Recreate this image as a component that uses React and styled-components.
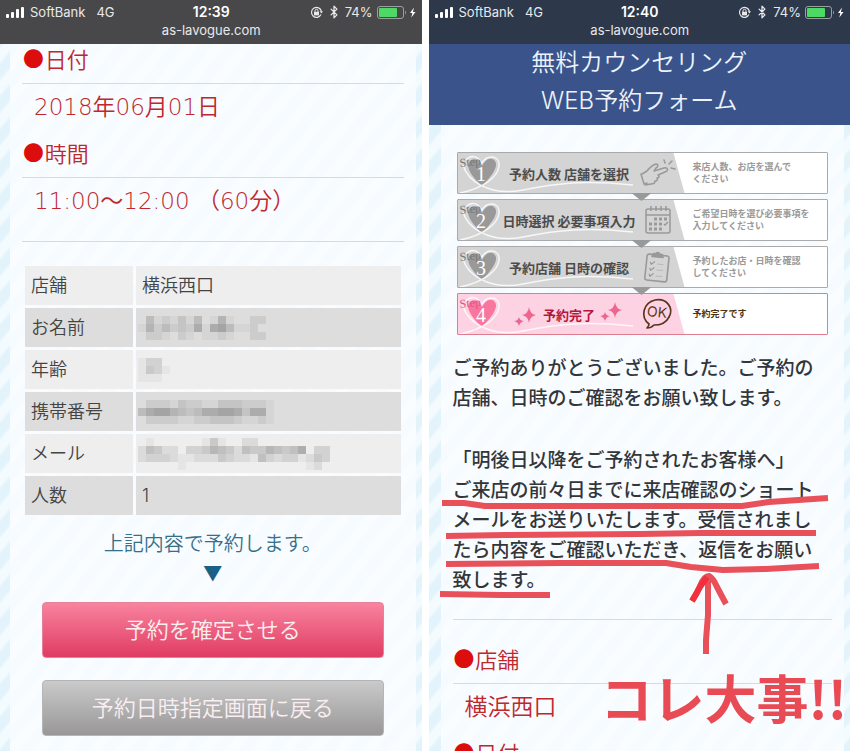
import React from 'react';
import styled, { createGlobalStyle } from 'styled-components';
import { Bluetooth } from 'lucide-react';

const GlobalStyle = createGlobalStyle`
    * {
        box-sizing: border-box;
    }

    body {
        margin: 0;
        background: white;
        font-family: Inter, "Noto Sans CJK JP", sans-serif;
    }

    h1, h2, p, dl, dt, dd {
        margin: 0;
        font-weight: inherit;
    }
`;

const Page = styled.main`
    display: grid;
    grid-template-columns: 1fr 1fr;
    gap: 7px;
    height: 100vh;
    overflow: hidden;
`;

const Phone = styled.section`
    position: relative;
    display: flex;
    flex-direction: column;
    min-width: 0;
    overflow: hidden;
    background: repeating-linear-gradient(130deg, #e3f3fc 0 8px, #f3fbfe 11px 18px, #e3f3fc 21px);
`;

const StatusBar = styled.header`
    flex: none;
    height: 44px;
    padding: 3px 5px 0 6px;
    background: ${props => props.$color};
    color: #e8e8ea;
    font-size: 13px;
    line-height: 18px;
    text-align: center;
`;

const StatusRow = styled.div`
    display: grid;
    grid-template-columns: 1fr auto 1fr;
    align-items: center;
`;

const StatusGroup = styled.div`
    display: flex;
    align-items: center;
    justify-content: ${props => props.$end ? 'flex-end' : 'flex-start'};
    gap: ${props => props.$end ? '4px' : '5px'};
`;

const Network = styled.span`
    margin-left: 6px;
`;

const Time = styled.span`
    font-weight: 600;
    font-size: 14px;
    color: white;
`;

const Panel = styled.div`
    flex: 1 0 auto;
    margin: 0 6px 0 ${props => props.$left};
    padding: 0 12px;
    background: repeating-linear-gradient(130deg, #f6fbff 0 8px, #fafdff 11px 18px, #f6fbff 21px);
`;

const Term = styled.dt`
    padding-bottom: 7px;
    border-bottom: 1px solid #d3dce0;
    color: #c0272d;
    font-size: 22px;
    font-weight: 350;
    line-height: 32px;
`;

const Dot = styled.span`
    color: #dc0d0d;
    font-size: 25px;
    line-height: 1;
`;

const Detail = styled.dd`
    && {
        padding: 7px 0 15px 12px;
    }
    color: #c0272d;
    font-family: "DejaVu Sans", "Noto Sans CJK JP", sans-serif;
    font-size: 23px;
    font-weight: 350;
    line-height: 32px;
`;

const Divider = styled.hr`
    margin: ${props => props.$margin};
    border: 0;
    border-top: 1px solid #d3dce0;
`;

const Table = styled.table`
    width: 100%;
    border-spacing: 3px;
    table-layout: fixed;
    color: #444;
    font-size: 18px;
    line-height: 26px;
`;

const Row = styled.tr`
    height: 39px;
    background: #eeeeee;

    &:nth-child(even) {
        background: #dddddd;
    }
`;

const Label = styled.th`
    width: 108px;
    padding: 0 6px;
    font-weight: 350;
    text-align: left;
`;

const Cell = styled.td`
    padding: 0 6px;
    font-weight: 350;
`;

const Blocks = styled.svg`
    display: block;
    margin-left: -4px;
`;

const Lead = styled.p`
    && {
        font-weight: 350;
    }
    padding-top: 11px;
    color: #35708a;
    font-size: 20px;
    line-height: 30px;
    text-align: center;
`;

const Pointer = styled.span`
    display: block;
    color: #1b6085;
`;

const Buttons = styled.div`
    display: flex;
    flex-direction: column;
    gap: 22px;
    padding: 13px 20px;
`;

const Button = styled.button`
    height: 56px;
    padding: 0 0 5px;
    border: 1px solid ${props => props.$border};
    border-radius: 4px;
    background: linear-gradient(${props => props.$from}, ${props => props.$to});
    color: #fbeef1;
    font-family: inherit;
    font-size: 22px;
    font-weight: 350;
`;

const Title = styled.h1`
    && {
        font-weight: 350;
    }
    padding-bottom: 5px;
    background: #3a548b;
    color: #edf2fb;
    font-size: 24px;
    line-height: 38px;
    text-align: center;
`;

const Steps = styled.ol`
    display: flex;
    flex-direction: column;
    gap: 5px;
    margin: 0 4px;
    padding: 27px 0 19px;
    list-style: none;
`;

const Step = styled.li`
    position: relative;
    display: grid;
    grid-template-columns: 227px 1fr;
    height: 42px;
    border: 1px solid ${props => props.$active ? '#df7d90' : '#aaaaaa'};
    border-radius: 1px;
    background: white;
    color: ${props => props.$active ? '#4a3413' : '#999999'};
`;

const StepMain = styled.div`
    display: grid;
    grid-template-columns: 42px 1fr 46px;
    align-items: center;
    background: ${props => props.$active ? '#fdd3e4' : '#d4d4d4'};
    clip-path: polygon(0 0, calc(100% - 11px) 0, 100% 100%, 0 100%);
`;

const StepBadge = styled.svg`
    display: block;
    width: 180px;
    height: 40px;
`;

const StepName = styled.h2`
    && {
        font-weight: 700;
    }
    display: flex;
    align-items: center;
    justify-content: center;
    gap: 5px;
    color: ${props => props.$active ? '#b5173a' : '#4c4c4c'};
    font-size: 13px;
    white-space: nowrap;
`;

const StepNote = styled.p`
    && {
        font-weight: 700;
    }
    align-self: center;
    padding-left: 8px;
    font-size: 9px;
    line-height: 12px;
`;

const StepArrow = styled.span`
    position: absolute;
    z-index: 1;
    top: 100%;
    left: 174px;
    width: 20px;
    height: 8px;
    background: #999999;
    clip-path: polygon(0 0, 100% 0, 50% 100%);
`;

const Message = styled.p`
    && {
        margin-bottom: 32px;
        font-weight: 500;
    }
    padding-right: 12px;
    color: #333639;
    font-size: 19px;
    line-height: 30px;
`;

const Marks = styled.svg`
    position: absolute;
    top: 0;
    left: 0;
    pointer-events: none;
`;

const Scribble = styled.p`
    position: absolute;
    top: 661px;
    left: 172px;
    color: #e94b55;
    font-family: "Noto Sans CJK JP", sans-serif;
    font-size: 52px;
    line-height: 72px;
    white-space: nowrap;

    && {
        font-weight: 700;
    }
`;

function Signal() {
    return (
        <svg width="19" height="11" viewBox="0 0 19 11" fill="white">
            <rect x="0" y="7" width="3" height="4" rx="1" />
            <rect x="5" y="5" width="3" height="6" rx="1" />
            <rect x="10" y="2" width="3" height="9" rx="1" />
            <rect x="15" y="0" width="3" height="11" rx="1" />
        </svg>
    );
}

function RotationLock() {
    return (
        <svg width="13" height="13" viewBox="0 0 13 13" fill="none" stroke="#e8e8ea" strokeWidth="1.2">
            <path d="M11 8.6A5 5 0 1 1 11.4 5.4" />
            <path d="M9.6 5.2h3.4L11.4 7.6z" fill="#e8e8ea" stroke="none" />
            <rect x="4" y="5.8" width="5" height="3.6" fill="#e8e8ea" stroke="none" />
            <path d="M5 6V4.8a1.5 1.5 0 0 1 3 0V6" strokeWidth="1" />
        </svg>
    );
}

function Battery() {
    return (
        <svg width="40" height="13" viewBox="0 0 40 13">
            <rect x="0.5" y="0.5" width="26" height="12" rx="2.5" fill="none" stroke="#9b9da0" />
            <rect x="2" y="2" width="18" height="9" rx="1" fill="#4cd964" />
            <path d="M28 4.5q2 2 0 4z" fill="#9b9da0" />
            <path d="M37 1.5l-4 5.5h2.4L34.3 11.5 38.5 6h-2.6z" fill="white" />
        </svg>
    );
}

function Status({ time, color }) {
    return (
        <StatusBar $color={color}>
            <StatusRow>
                <StatusGroup>
                    <Signal />
                    <span>SoftBank</span>
                    <Network>4G</Network>
                </StatusGroup>
                <Time>{time}</Time>
                <StatusGroup $end>
                    <RotationLock />
                    <Bluetooth size={14} strokeWidth={2.2} />
                    <span>74%</span>
                    <Battery />
                </StatusGroup>
            </StatusRow>
            <div>as-lavogue.com</div>
        </StatusBar>
    );
}

// each digit is the darkness of one 8px block
function Mosaic({ rows }) {
    return (
        <Blocks width={rows[0].length * 8} height={rows.length * 8} aria-hidden="true">
            {rows.map((row, y) => row.split('').map((shade, x) => (
                <rect
                    key={`${x}-${y}`}
                    x={x * 8}
                    y={y * 8}
                    width="8"
                    height="8"
                    fill="#555"
                    opacity={Number(shade) * 0.06}
                />
            )))}
        </Blocks>
    );
}

const details = [
    { label: '店舗', value: '横浜西口' },
    { label: 'お名前', rows: ['0412131401510022', '1524232616741120', '0221021011210022'] },
    { label: '年齢', rows: ['1330', '1431', '1110'] },
    { label: '携帯番号', rows: ['02221322113332221', '46775434667763661', '02222112233321121'] },
    { label: 'メール', rows: ['010000001410022000000000', '254220334654254465457033', '233321122243221532331243', '000001000000000000000120'] },
    { label: '人数', value: '1' },
];

function Sparkle({ flip }) {
    return (
        <svg width="24" height="26" viewBox="0 0 24 26" fill="#ec6790">
            {flip ? (
                <>
                    <path d="M15 1q1 7 7 8-6 1-7 8-1-7-7-8 6-1 7-8z" />
                    <path d="M5 11q1 4 5 4-4 1-5 5-1-4-5-5 4 0 5-4z" />
                </>
            ) : (
                <>
                    <path d="M15 6q1 7 7 8-6 1-7 8-1-7-7-8 6-1 7-8z" />
                    <path d="M5 16q1 4 5 4-4 1-5 5-1-4-5-5 4 0 5-4z" />
                </>
            )}
        </svg>
    );
}

function Badge({ number, active }) {
    const main = active ? '#f9779f' : '#999999';
    return (
        <StepBadge viewBox="0 0 180 40">
            <path
                d="M24 33C13 23 7 13 12 8c4-4 10-1 12 5 3-6 8-9 12-6 6 5-2 16-12 26z"
                fill={main}
            />
            <path
                d="M8 7C13 1 20 3 24 10c5-9 18-8 17 3-1 10-14 22-39 27M5 12c4 14 24 32 60 25s60-10 110-5"
                fill="none"
                stroke="white"
                strokeOpacity="0.8"
                strokeWidth="1.5"
            />
            <text x="2" y="14" fontSize="12" fontFamily="Liberation Serif, serif" fill={active ? '#e05580' : '#777'} transform="rotate(-6 2 14)">Step</text>
            <text x="18" y="28" fontSize="20" fontFamily="Liberation Serif, serif" fill="white">{number}</text>
        </StepBadge>
    );
}

function Hand() {
    return (
        <svg width="38" height="30" viewBox="0 0 38 30" fill="none" stroke="#999" strokeWidth="1.5" strokeLinecap="round" strokeLinejoin="round">
            <path d="M3 16l5-3c3-4 6-6 9-7 3 0 2 3 0 4l-2 3 10-3c4-1 5 3 1 4l-7 3c2 1 1 3-1 3 1 2 0 3-2 3 0 2-2 3-4 3l-6 1" />
            <path d="M2 16l3 10 3-1" />
            <path d="M26 5l-1-3M30 6l3-3M32 10l4 1" />
        </svg>
    );
}

function Calendar() {
    return (
        <svg width="38" height="30" viewBox="0 0 38 30" fill="none" stroke="#999" strokeWidth="1.5">
            <rect x="7" y="4" width="24" height="24" rx="2" />
            <path d="M7 10h24M12 1v5M17 1v5M22 1v5M27 1v5" />
            <path d="M15 14h14M10 19h14M10 24h14" strokeWidth="3" strokeDasharray="3 2" />
            <path d="M25 19l1 1 3-3" />
        </svg>
    );
}

function Clipboard() {
    return (
        <svg width="38" height="32" viewBox="0 0 38 32" fill="none" stroke="#999" strokeWidth="1.6" strokeLinecap="round" strokeLinejoin="round">
            <g transform="rotate(6 18 16)">
                <rect x="7" y="4" width="22" height="26" rx="2" />
                <path d="M12 6l1-3h2q2-3 5 0h2l1 3z" fill="#999" />
                <path d="M11 12l1 2 3-3M11 18l1 2 3-3M11 24l1 2 3-3" strokeWidth="1.2" />
                <path d="M18 13h6M18 19h6M18 25h6" stroke="#b8b8b8" strokeWidth="1" />
            </g>
        </svg>
    );
}

function Bubble() {
    return (
        <svg width="38" height="34" viewBox="0 0 38 34">
            <path d="M10 27C1 20 4 6 16 3c12-2 19 8 14 17-4 8-11 8-15 8-2 2-4 3-7 3 2-2 2-3 2-4z" fill="none" stroke="#5a3420" strokeWidth="1.7" strokeLinejoin="round" />
            <text x="18" y="20" fontSize="14" textAnchor="middle" fill="#5a3420" transform="rotate(6 18 16)">OK</text>
        </svg>
    );
}

const steps = [
    { name: '予約人数 店舗を選択', note: ['来店人数、お店を選んで', 'ください'], icon: <Hand /> },
    { name: '日時選択 必要事項入力', note: ['ご希望日時を選び必要事項を', '入力してください'], icon: <Calendar /> },
    { name: '予約店舗 日時の確認', note: ['予約したお店・日時を確認', 'してください'], icon: <Clipboard /> },
    { name: '予約完了', note: ['予約完了です'], icon: <Bubble />, active: true },
];

function Item({ term, children }) {
    return (
        <>
            <Term><Dot>●</Dot>{term}</Term>
            {children && <Detail>{children}</Detail>}
        </>
    );
}

function Confirm() {
    return (
        <Phone>
            <Status time="12:39" color="#48484a" />
            <Panel $left="10px">
                <dl>
                    <Item term="日付">2018年06月01日</Item>
                    <Item term="時間">11:00〜12:00 （60分）</Item>
                </dl>
                <Divider $margin="9px 0 21px" />
                <Table>
                    <tbody>
                        {details.map(detail => (
                            <Row key={detail.label}>
                                <Label scope="row">{detail.label}</Label>
                                <Cell>{detail.rows ? <Mosaic rows={detail.rows} /> : detail.value}</Cell>
                            </Row>
                        ))}
                    </tbody>
                </Table>
                <Lead>
                    上記内容で予約します。
                    <Pointer>▼</Pointer>
                </Lead>
                <Buttons>
                    <Button $from="#f9839f" $to="#e03c62" $border="#e5829a">予約を確定させる</Button>
                    <Button $from="#cacaca" $to="#999797" $border="#b5b5b5">予約日時指定画面に戻る</Button>
                </Buttons>
            </Panel>
        </Phone>
    );
}

function Complete() {
    return (
        <Phone>
            <Status time="12:40" color="#2d394b" />
            <Title>無料カウンセリング<br />WEB予約フォーム</Title>
            <Panel $left="12px">
                <Steps>
                    {steps.map((step, i) => (
                        <Step key={step.name} $active={step.active}>
                            <StepMain $active={step.active}>
                                <Badge number={i + 1} active={step.active} />
                                <StepName $active={step.active}>
                                    {step.active && <Sparkle />}
                                    {step.name}
                                    {step.active && <Sparkle flip />}
                                </StepName>
                                {step.icon}
                            </StepMain>
                            <StepNote>
                                {step.note.map(line => <span key={line}>{line}<br /></span>)}
                            </StepNote>
                            {!step.active && <StepArrow />}
                        </Step>
                    ))}
                </Steps>
                <Message>ご予約ありがとうございました。ご予約の店舗、日時のご確認をお願い致します。</Message>
                <Message>
                    「明後日以降をご予約されたお客様へ」<br />
                    ご来店の前々日までに来店確認のショートメールをお送りいたします。受信されましたら内容をご確認いただき、返信をお願い致します。
                </Message>
                <Divider $margin="-9px 0 24px" />
                <dl>
                    <Item term="店舗">横浜西口</Item>
                    <Item term="日付" />
                </dl>
            </Panel>
            <Marks width="422" height="751" viewBox="428 0 422 751" fill="none" stroke="#e8505a" strokeWidth="6" strokeLinejoin="round">
                <path d="M441 503L463 503 484 506 560 506 741 506 768 502 827 498" />
                <path d="M445 536L505 535 640 534 700 533 815 533" />
                <path d="M445 564L560 563 665 563 690 567 722 570 765 569 818 566" />
                <path d="M439 594L500 595 549 595" />
                <path d="M705 654V640L707 615V578" />
                <path d="M691 601Q696 594 699 586 703 576 708 576 712 578 716 587L725 604" />
                <path d="M691 601L699 587 706 577" stroke="#f0303d" />
            </Marks>
            <Scribble>コレ大事!!</Scribble>
        </Phone>
    );
}

export default function App() {
    return (
        <>
            <GlobalStyle />
            <Page>
                <Confirm />
                <Complete />
            </Page>
        </>
    );
}
